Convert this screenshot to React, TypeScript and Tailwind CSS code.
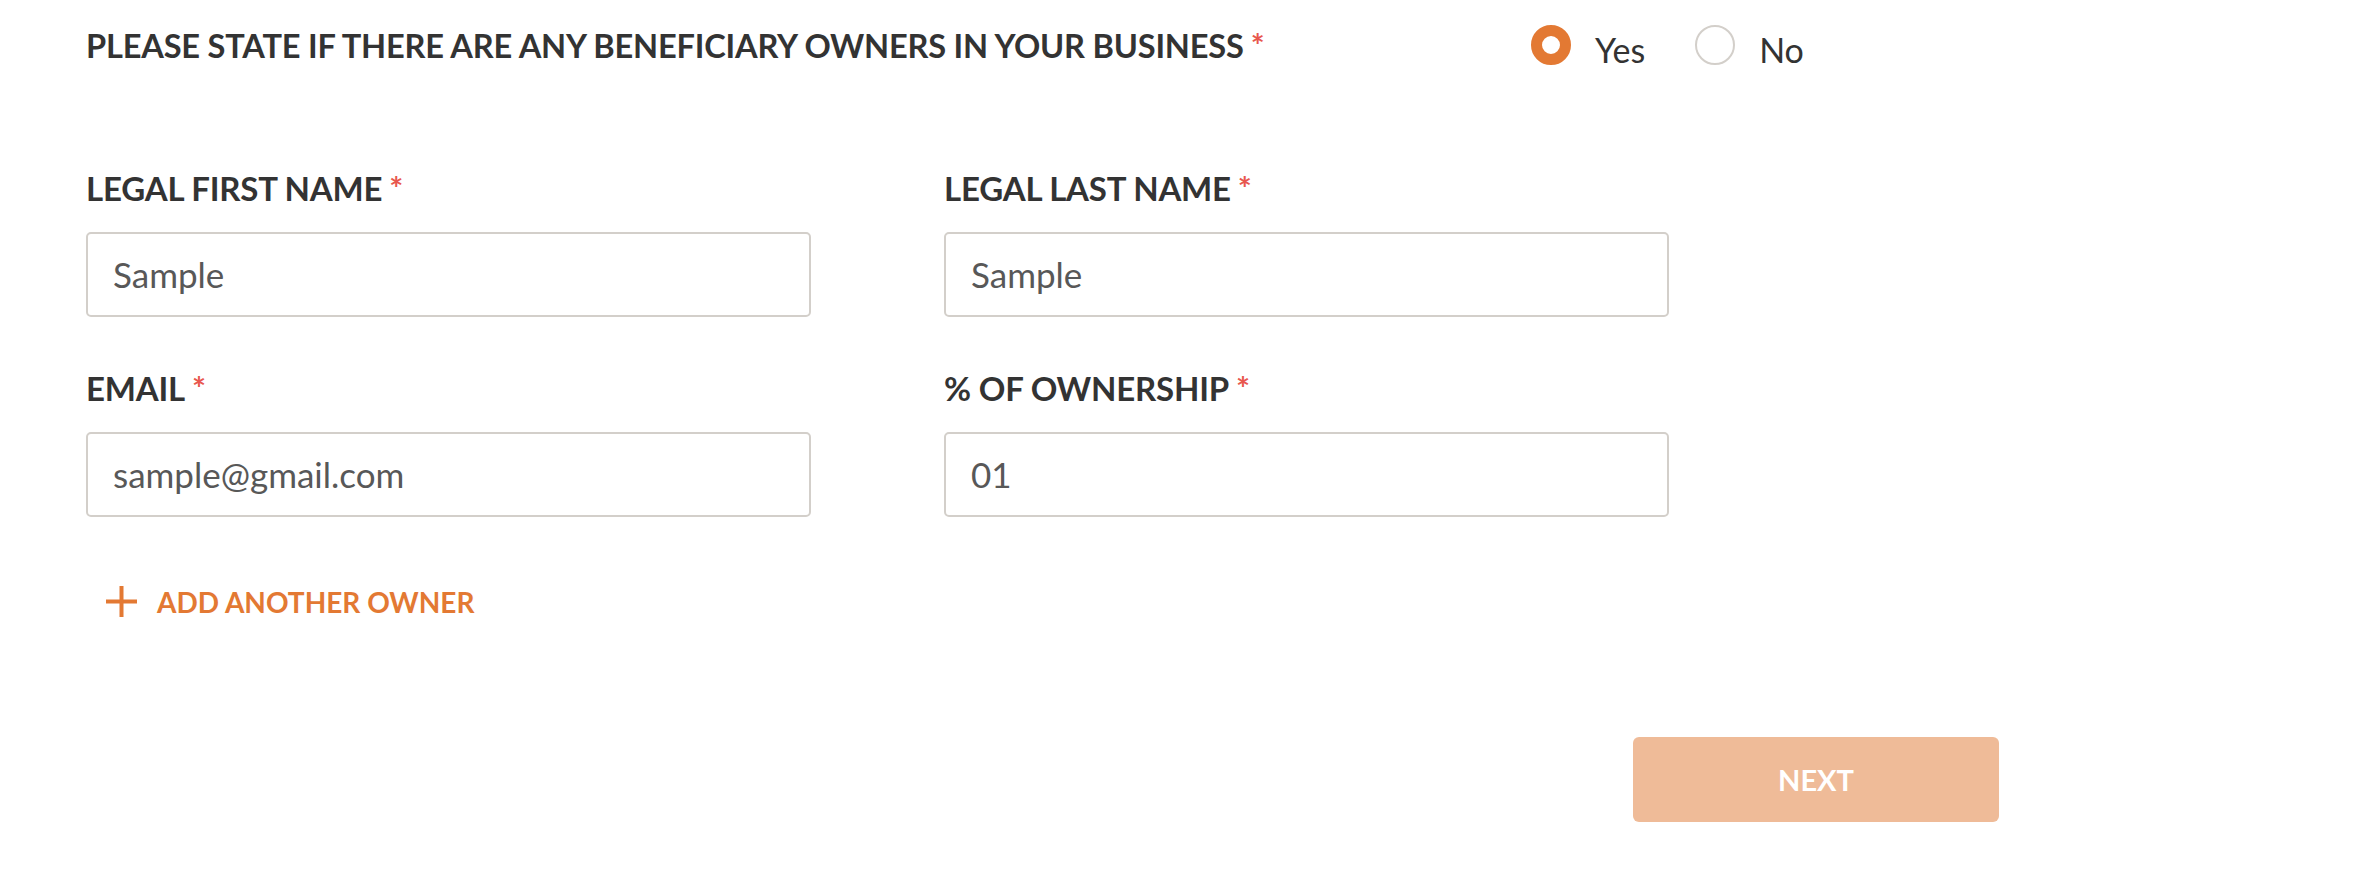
import React from "react";

function Label({ text, size = "field" }: { text: string; size?: "field" | "head" }) {
  return (
    <div
      className={
        size === "head"
          ? "text-[32.6px] font-bold leading-none text-[#333333] tracking-[-0.2px]"
          : "text-[33px] font-bold leading-none text-[#333333] tracking-[-0.2px]"
      }
    >
      {text}
      <span className="ml-[7px] text-[#e8574e]">*</span>
    </div>
  );
}

function Field({ label, value }: { label: string; value: string }) {
  return (
    <div className="flex flex-col">
      <Label text={label} />
      <div className="mt-[27px] h-[85px] w-[725px] rounded-[5px] border-2 border-[#d3cfca] bg-white flex items-center pl-[25px] text-[35px] text-[#585858]">
        {value}
      </div>
    </div>
  );
}

function Radio({ label, checked }: { label: string; checked: boolean }) {
  return (
    <div className="flex items-center">
      {checked ? (
        <div className="h-[40px] w-[40px] rounded-full border-[11px] border-[#e37933] bg-white" />
      ) : (
        <div className="h-[40px] w-[40px] rounded-full border-2 border-[#d3cfca] bg-white" />
      )}
      <span className="ml-[24px] mt-[10px] text-[34px] leading-none text-[#333333]">{label}</span>
    </div>
  );
}

export default function App() {
  return (
    <div className="h-[875px] w-full bg-white font-['Lato',_sans-serif]">
      <div className="pl-[86px] pt-[23px]">
        <div className="flex items-start">
          <div className="w-[1445px] pt-[7px]">
            <Label size="head" text="PLEASE STATE IF THERE ARE ANY BENEFICIARY OWNERS IN YOUR BUSINESS" />
          </div>
          <div className="flex items-center gap-[50px]">
            <Radio label="Yes" checked={true} />
            <Radio label="No" checked={false} />
          </div>
        </div>

        <div className="mt-[105px] grid grid-cols-[725px_725px] gap-x-[133px] gap-y-[55px]">
          <Field label="LEGAL FIRST NAME" value="Sample" />
          <Field label="LEGAL LAST NAME" value="Sample" />
          <Field label="EMAIL" value="sample@gmail.com" />
          <Field label="% OF OWNERSHIP" value="01" />
        </div>

        <div className="mt-[69px] ml-[20px] flex items-center text-[#e37933]">
          <svg width="31" height="31" viewBox="0 0 31 31">
            <rect x="0" y="13.5" width="31" height="4" fill="#e37933" />
            <rect x="13.5" y="0" width="4" height="31" fill="#e37933" />
          </svg>
          <span className="ml-[20px] text-[28px] font-bold leading-none">ADD ANOTHER OWNER</span>
        </div>

        <div className="mt-[120px] flex">
          <div className="ml-[1547px] flex h-[85px] w-[366px] items-center justify-center rounded-[6px] bg-[#efbb98] text-[29px] font-bold text-white">
            NEXT
          </div>
        </div>
      </div>
    </div>
  );
}
